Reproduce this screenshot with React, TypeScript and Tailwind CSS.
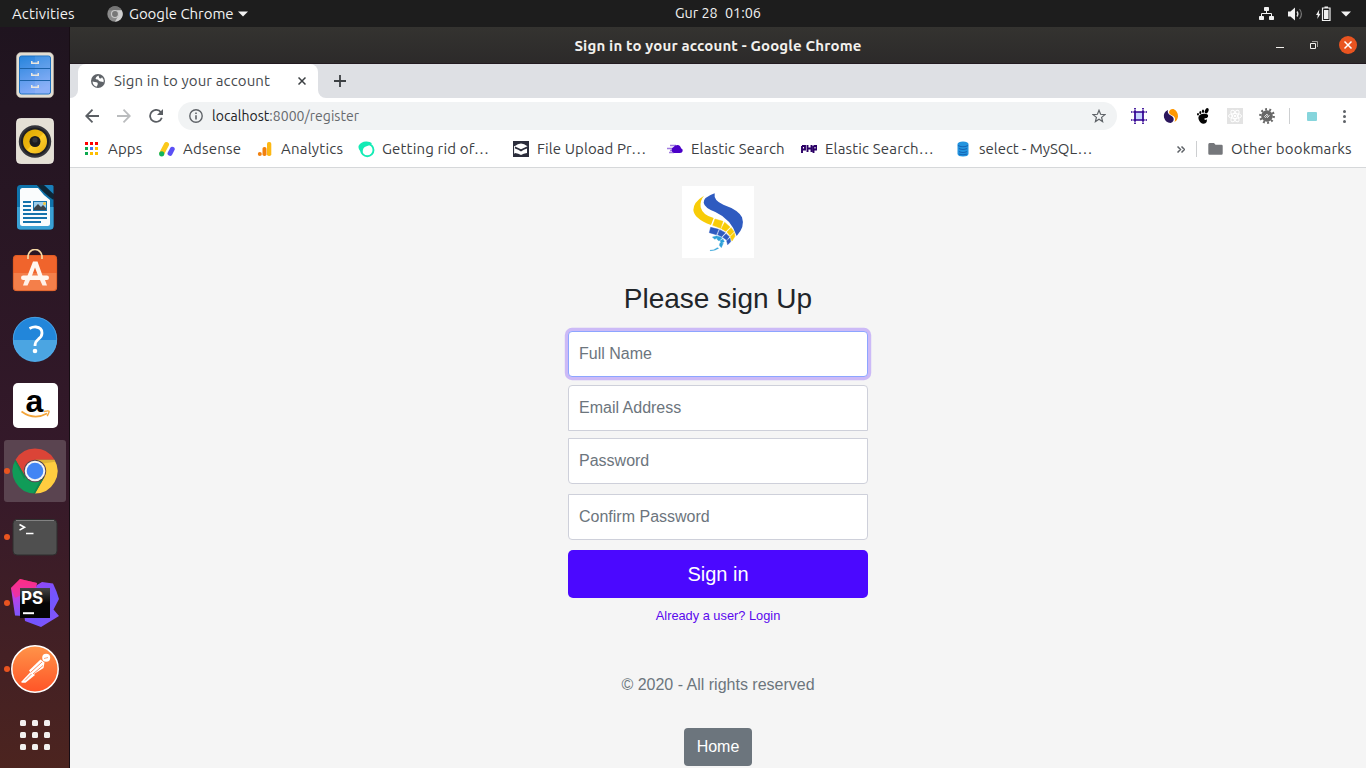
import type { ReactNode } from "react";

const ui = "font-['Ubuntu','Noto_Sans',sans-serif]";

/* ---------- Dock icons ---------- */

const FilesIcon = () => (
  <svg width="48" height="48" viewBox="0 0 48 48">
    <defs>
      <linearGradient id="fa" x1="0" y1="0" x2="0.3" y2="1">
        <stop offset="0" stopColor="#2584dc" />
        <stop offset="1" stopColor="#82aaf8" />
      </linearGradient>
    </defs>
    <rect x="5.5" y="1.5" width="37" height="45" rx="4.5" fill="#e3ded3" stroke="#b9b3a8" strokeWidth="0.6" />
    <rect x="8.5" y="5" width="31" height="38" rx="2" fill="url(#fa)" stroke="#1c71c2" />
    <path d="M24 5v38h13a2 2 0 0 0 2-2V7a2 2 0 0 0-2-2z" fill="#fff" opacity="0.08" />
    <path d="M9 17.5h30M9 29.5h30" stroke="#1c62a8" />
    <path d="M20 10h1.500v1.500h5V10H28v3h-8zM20 22h1.500v1.500h5V22H28v3h-8zM20 34h1.500v1.500h5V34H28v3h-8z" fill="#ebe7df" />
  </svg>
);

const MusicIcon = () => (
  <svg width="48" height="48" viewBox="0 0 48 48">
    <defs>
      <linearGradient id="ma" x1="0" y1="0" x2="1" y2="1">
        <stop offset="0" stopColor="#d9a800" />
        <stop offset="0.5" stopColor="#efb711" />
        <stop offset="0.52" stopColor="#ffd02b" />
        <stop offset="1" stopColor="#e6ad10" />
      </linearGradient>
    </defs>
    <rect x="5.5" y="1.5" width="37" height="45" rx="4" fill="#e4e0d5" stroke="#f3f0e8" strokeWidth="0.8" />
    <circle cx="24" cy="24.5" r="16.2" fill="#34353b" />
    <circle cx="24" cy="24.5" r="14" fill="#1f2024" />
    <circle cx="24" cy="24.5" r="12" fill="url(#ma)" />
    <circle cx="24" cy="24.5" r="5.5" fill="#1b1b1e" />
    <circle cx="24" cy="23" r="2.6" fill="#34353a" />
  </svg>
);

const WriterIcon = () => (
  <svg width="48" height="48" viewBox="0 0 48 48">
    <path d="M9.5 2H26l16.5 14v27a3.5 3.5 0 0 1-3.5 3.5h-29.5A3.5 3.5 0 0 1 6 43V5.5A3.5 3.5 0 0 1 9.5 2z" fill="#0f73ab" />
    <path d="M6 24h36.5v19a3.5 3.5 0 0 1-3.5 3.5h-29.5A3.5 3.5 0 0 1 6 43z" fill="#3aa0d4" />
    <path d="M26 2h15q1.5 0 1.5 1.5V17q-9-6-16.5-15z" fill="#0e2636" />
    <path d="M33 2h8q1.5 0 1.5 1.5V11z" fill="#1a7fba" />
    <path d="M11.5 5H27q5 7 12 12v23.5q0 2.500-2.500 2.500h-25Q9 43 9 40.500v-33Q9 5 11.500 5z" fill="#fafcfd" />
    <path d="M12 19h8M12 23h8M12 27h8M12 31h24M12 35h24M12 39h18" stroke="#1673ac" strokeWidth="2" />
    <rect x="22" y="18" width="14" height="10" fill="#1673ac" />
    <rect x="23" y="19" width="12" height="8" fill="#9dcdea" />
    <path d="M23 27v-2l4-4 3 3 2-2 3 3v2z" fill="#3d4449" />
    <circle cx="33.5" cy="20.5" r="1.5" fill="#f5c73d" />
  </svg>
);

const SoftwareIcon = () => (
  <svg width="48" height="48" viewBox="0 0 48 48">
    <rect x="2" y="6" width="44" height="36" rx="4" fill="#f0642c" />
    <path d="M2 24h44v14a4 4 0 0 1-4 4H6a4 4 0 0 1-4-4z" fill="#f47f4a" />
    <rect x="2.3" y="6.5" width="43.4" height="35.2" rx="3.5" fill="none" stroke="#d7581f" strokeWidth="0.7" />
    <path d="M17 10V7.5a7 7 0 0 1 14 0V10" fill="none" stroke="#f5d8a4" strokeWidth="1.7" />
    <path d="M22 12.5h4.5L32 28h-4.500L24 18.500 20.500 28H16z" fill="#fff7f0" />
    <rect x="10" y="26.5" width="28" height="4.5" rx="2.2" fill="#fff7f0" />
    <path d="M14 31h5l-2.500 5.500H12zM29 31h5l2 5.500h-4.500z" fill="#fff1e8" />
  </svg>
);

const HelpIcon = () => (
  <svg width="48" height="48" viewBox="0 0 48 48">
    <circle cx="24" cy="24" r="22" fill="#2286da" />
    <path d="M2 25h44a22 22 0 0 1-44 0z" fill="#4ba5e2" />
    <circle cx="24" cy="24" r="21.7" fill="none" stroke="#52a9e8" strokeWidth="0.8" />
    <path d="M18.5 13.5Q22 11.700 25 12q6 .5 6 6 0 3.500-3.500 6-3.500 2.700-3.500 7" fill="none" stroke="#fff" strokeWidth="2.8" />
    <circle cx="24" cy="36" r="2.3" fill="#fff" />
  </svg>
);

const AmazonIcon = () => (
  <div className="relative flex h-12 w-12 items-center justify-center">
    <div className="flex h-[45px] w-[45px] justify-center rounded-[5px] bg-white pr-px font-['Liberation_Sans',Arial,sans-serif] text-[32px] leading-[36px] font-bold text-black">
      a
    </div>
    <svg className="absolute top-0 left-0" width="48" height="48" viewBox="0 0 48 48">
      <path d="M10.5 30.5Q23 39.500 36 32.500" fill="none" stroke="#f3a53a" strokeWidth="1.7" />
      <path d="M33 30.5q4.500-1 5-.3t-1.800 5" fill="none" stroke="#f3a53a" strokeWidth="1.4" />
    </svg>
  </div>
);

const ChromeIcon = () => (
  <svg width={48} height={48} viewBox="0 0 48 48">
    <path d="M4.500 12.750A22.500 22.500 0 0 1 43.500 12.750L24 12.750A11.250 11.250 0 0 0 14.260 29.620z" fill="#db4437" />
    <path d="M43.500 12.750A22.500 22.500 0 0 1 24 46.500L33.740 29.620A11.250 11.250 0 0 0 24 12.750z" fill="#ffcd40" />
    <path d="M24 46.500A22.500 22.500 0 0 1 4.500 12.750L14.260 29.620A11.250 11.250 0 0 0 33.740 29.620z" fill="#109c58" />
    <path d="M24 12.750h19.500l.8 2L29 17zM14.260 29.620L4.500 12.750l-.8 1.600 9.500 18zM33.740 29.620L24 46.500l-1.800 0 9-17z" fill="#000" opacity="0.12" />
    <circle cx="24" cy="24" r="10.3" fill="#f4f4f4" />
    <circle cx="24" cy="24" r="8.3" fill="#4285f4" />
  </svg>
);

const ChromeSymbolic = () => (
  <svg width="16" height="16" viewBox="0 0 48 48">
    <circle cx="24" cy="24" r="23" fill="#8b8b8b" />
    <path d="M4 12.500A23 23 0 0 1 44 12.500L24 13z" fill="#747474" />
    <path d="M44 12.500A23 23 0 0 1 24 47L34 29.600 30 12.750z" fill="#cfcfcf" />
    <circle cx="24" cy="24" r="10.5" fill="#777" stroke="#c9c9c9" strokeWidth="3.5" />
  </svg>
);

const TerminalIcon = () => (
  <svg width="48" height="48" viewBox="0 0 48 48">
    <rect x="2" y="6.5" width="44" height="35.5" rx="4" fill="#4f4f4f" stroke="#2f2f2f" />
    <path d="M5 7.5h38" stroke="#828282" />
    <path d="M8.5 11.5l5 2.800-5 2.800" fill="none" stroke="#fff" strokeWidth="1.6" />
    <path d="M15 20.500h7.500" stroke="#fff" strokeWidth="1.5" />
  </svg>
);

const StormIcon = () => (
  <div className="relative h-12 w-12">
    <svg className="absolute top-0 left-0" width="48" height="48" viewBox="0 0 48 48">
      <defs>
        <linearGradient id="sa" x1="0" y1="0" x2="0" y2="1">
          <stop offset="0" stopColor="#fc3187" />
          <stop offset="0.4" stopColor="#c83de0" />
          <stop offset="1" stopColor="#7b58ff" />
        </linearGradient>
        <linearGradient id="sb" x1="0" y1="0" x2="1" y2="1">
          <stop offset="0" stopColor="#a63ff0" />
          <stop offset="0.6" stopColor="#7256ff" />
          <stop offset="1" stopColor="#8a54f5" />
        </linearGradient>
        <linearGradient id="sc" x1="0" y1="0" x2="0" y2="1">
          <stop offset="0" stopColor="#454545" />
          <stop offset="0.5" stopColor="#050505" />
        </linearGradient>
      </defs>
      <path d="M26 6l5-3 11 1.500 3.500 8L48 20l-5.500 10.500L48 37 30 48 14 42l-1-8z" fill="url(#sb)" />
      <path d="M0 9l9-9 17 4-2 14-12 19-8-.5z" fill="url(#sa)" />
      <path d="M0 9l9-9 17 4-3 6-19 9z" fill="#ff2d83" opacity="0.65" />
      <rect x="9" y="9" width="30" height="30" fill="url(#sc)" />
      <path d="M12 34.200h11" stroke="#fff" strokeWidth="2" />
    </svg>
    <span className="absolute top-[9px] left-[10px] font-['Inter','Open_Sans',sans-serif] text-[17px] leading-5 font-bold text-white">PS</span>
  </div>
);

const PostmanIcon = () => (
  <svg width="48" height="48" viewBox="0 0 48 48">
    <defs>
      <linearGradient id="pa" x1="0" y1="0" x2="0" y2="1">
        <stop offset="0" stopColor="#ff9449" />
        <stop offset="1" stopColor="#ff5427" />
      </linearGradient>
    </defs>
    <circle cx="24" cy="24" r="23.2" fill="url(#pa)" stroke="#fff" strokeWidth="1.5" />
    <circle cx="35.2" cy="12.8" r="4" fill="#fff" />
    <path d="M18 25.500L29.500 14.500l4 3-1 5.500L21.500 30z" fill="#fff" />
    <path d="M20 26.500L10.500 36.500l0 1.200h4L24 30z" fill="#fff" />
    <path d="M19.500 27.500L31 17M22 29L32 20.500M14 35.500l6.500-6.500" stroke="#ff7038" strokeWidth="0.8" />
    <path d="M33 13.500l4-1" stroke="#ff8040" strokeWidth="0.7" />
  </svg>
);

const AppsGridIcon = () => (
  <div className="grid grid-cols-3 gap-[6px]">
    {Array.from({ length: 9 }, (_, i) => (
      <div key={i} className="h-[6px] w-[6px] rounded-[1.5px] bg-[#f2f0f0]" />
    ))}
  </div>
);

const dock: { icon: ReactNode; running?: boolean; active?: boolean }[] = [
  { icon: <FilesIcon /> },
  { icon: <MusicIcon /> },
  { icon: <WriterIcon /> },
  { icon: <SoftwareIcon /> },
  { icon: <HelpIcon /> },
  { icon: <AmazonIcon /> },
  { icon: <ChromeIcon />, running: true, active: true },
  { icon: <TerminalIcon />, running: true },
  { icon: <StormIcon />, running: true },
  { icon: <PostmanIcon />, running: true },
  { icon: <AppsGridIcon /> },
];

const Dock = () => (
  <aside className="flex w-[70px] shrink-0 flex-col border-r border-[#170d14] bg-linear-to-b from-[#1f141f] via-[#35192a] via-60% to-[#4c241f] pt-[15px]">
    {dock.map((d, i) => (
      <div key={i} className="flex h-[66px] items-center justify-center pl-px">
        <div className={d.active ? "relative flex h-[62px] w-[62px] items-center justify-center rounded-[3px] bg-[#5a4450]" : "relative flex h-[62px] w-[62px] items-center justify-center"}>
          {d.running && <span className="absolute top-[28px] left-0 h-[6px] w-[6px] rounded-full bg-[#e95420]" />}
          {d.icon}
        </div>
      </div>
    ))}
  </aside>
);

/* ---------- System bar ---------- */

const TopBar = () => (
  <header className={`${ui} grid h-[27px] shrink-0 grid-cols-[1fr_auto_1fr] items-center bg-[#1d1d1d] text-[15px] text-[#f2f2f2]`}>
    <div className="flex items-center pl-3">
      <span className="w-[95px] pt-px tracking-[0.12px]">Activities</span>
      <ChromeSymbolic />
      <span className="ml-[6px] w-[109px] pt-px tracking-[-0.05px] whitespace-nowrap">Google Chrome</span>
      <svg width="10" height="6" viewBox="0 0 10 6"><path d="M0 0.5h10L5 5.500z" fill="#f2f2f2" /></svg>
    </div>
    <div className="ml-[70px] flex w-[86px] justify-between text-[14.4px] whitespace-nowrap">
      <span>Gur 28</span>
      <span>01:06</span>
    </div>
    <div className="flex items-center justify-end pr-[15px]">
      <svg width="16" height="14" viewBox="0 0 16 14" fill="#f2f2f2">
        <rect x="5" y="0" width="5" height="4" rx="0.8" /><rect x="0" y="9" width="5" height="4" rx="0.8" /><rect x="10" y="9" width="5" height="4" rx="0.8" />
        <path d="M7.500 4v3M2.500 9.500V6.500h10v3" fill="none" stroke="#f2f2f2" />
      </svg>
      <svg className="ml-[13px]" width="15" height="14" viewBox="0 0 15 14">
        <path d="M0 4.500h2.500L7 0.500v13L2.500 9.500H0z" fill="#f2f2f2" />
        <path d="M9 4.500q1.800 2.500 0 5" fill="none" stroke="#dedede" strokeWidth="1.3" />
        <path d="M11.500 2q3.800 5 0 10" fill="none" stroke="#777" strokeWidth="1.2" />
      </svg>
      <svg className="ml-[13px]" width="15" height="16" viewBox="0 0 15 16">
        <path d="M3.300 3.500L0 9h1.800L1.300 13 4.500 7.800H2.800z" fill="#f2f2f2" />
        <path d="M6.500 2h7.500v12.500H6.500z" fill="none" stroke="#f2f2f2" strokeWidth="1.2" />
        <path d="M8.500 0.500h3.500V2H8.500zM8 4h4.500v9H8z" fill="#f2f2f2" />
      </svg>
      <svg className="ml-[10px]" width="10" height="6" viewBox="0 0 10 6"><path d="M0 0.5h10L5 5.500z" fill="#f2f2f2" /></svg>
    </div>
  </header>
);

/* ---------- Browser chrome ---------- */

const TitleBar = () => (
  <div className={`${ui} grid h-[37px] shrink-0 grid-cols-[1fr_auto_1fr] items-center border-b border-[#221a20] bg-linear-to-b from-[#343330] to-[#2c2a2a]`}>
    <span />
    <span className="pt-[2px] text-[15px] font-bold tracking-[0.16px] whitespace-nowrap text-[#f3f1ed]">Sign in to your account - Google Chrome</span>
    <div className="flex items-center justify-end pr-[9px]">
      <svg width="8" height="12" viewBox="0 0 8 12"><path d="M0 8.500h8" stroke="#f3f1ed" /></svg>
      <svg className="ml-[26px]" width="8" height="8" viewBox="0 0 8 8">
        <path d="M2 .5h5.500V6" fill="none" stroke="#a09d99" />
        <path d="M.5 2.500h5v5h-5z" fill="none" stroke="#f3f1ed" />
      </svg>
      <svg className="ml-[21px]" width="18" height="18" viewBox="0 0 18 18">
        <circle cx="9" cy="9" r="9" fill="#e95420" />
        <path d="M5.500 5.500l7 7M12.500 5.500l-7 7" stroke="#fff" strokeWidth="1.5" />
      </svg>
    </div>
  </div>
);

const GlobeIcon = () => (
  <svg width="16" height="16" viewBox="0 0 16 16">
    <circle cx="8" cy="8" r="7" fill="#5f6368" />
    <path d="M2.500 8.500Q5 9 6.500 9.200 8 9.500 7.800 11q-.3 1.500-1.300 2.700-3.500-1-4-5.200zM8.500 2.500Q6 3.500 5.500 5.500q.5 1.300 2.500 1 .8 2 2.500 2 1.800.3 3 .8.500-3-1.500-5-.8 1.500-2 1.200Q9 5 8.500 2.500z" fill="#fff" />
  </svg>
);

const TabStrip = () => (
  <div className={`${ui} flex h-[34px] shrink-0 bg-[#dee0e4]`}>
    <div className="w-2 bg-white"><div className="h-full w-full rounded-br-lg bg-[#dee0e4]" /></div>
    <div className="flex w-[240px] items-center rounded-t-lg bg-white pl-3">
      <GlobeIcon />
      <span className="ml-2 flex-1 text-[15px] tracking-[0.14px] whitespace-nowrap text-[#45494d]">Sign in to your account</span>
      <svg className="mr-3" width="8" height="8" viewBox="0 0 8 8"><path d="M.5.5l7 7M7.500.5l-7 7" stroke="#3c4043" strokeWidth="1.5" /></svg>
    </div>
    <div className="flex-1 bg-white">
      <div className="flex h-full items-center rounded-bl-lg bg-[#dee0e4] pl-4">
        <svg width="12" height="12" viewBox="0 0 12 12"><path d="M6 0v12M0 6h12" stroke="#3c4043" strokeWidth="1.8" /></svg>
      </div>
    </div>
  </div>
);

const Toolbar = () => (
  <div className={`${ui} flex h-9 shrink-0 items-center bg-white pl-[15px]`}>
    <svg width="14" height="14" viewBox="0 0 14 14"><path d="M14 7H1.500M7.500.7L1.200 7l6.300 6.300" fill="none" stroke="#5a5e63" strokeWidth="1.8" /></svg>
    <svg className="ml-[18px]" width="14" height="14" viewBox="0 0 14 14"><path d="M0 7h12.500M6.500.7L12.800 7l-6.300 6.300" fill="none" stroke="#babcbe" strokeWidth="1.8" /></svg>
    <svg className="ml-[18px]" width="14" height="14" viewBox="0 0 14 14">
      <path d="M12 3.400A6 6 0 1 0 12.800 8.800" fill="none" stroke="#5a5e63" strokeWidth="1.8" />
      <path d="M14 0v6H8z" fill="#5a5e63" />
    </svg>
    <div className="ml-[15px] flex h-7 w-[939px] items-center rounded-full bg-[#f1f3f4] pl-[11px] text-[14px]">
      <svg width="14" height="14" viewBox="0 0 14 14">
        <circle cx="7" cy="7" r="6.2" fill="none" stroke="#5f6368" strokeWidth="1.4" />
        <path d="M6.200 6.200h1.600v4.300H6.200zM6.200 3.400h1.600V5H6.200z" fill="#5f6368" />
      </svg>
      <span className="ml-[9px] flex-1 tracking-[0.04px] text-[#66696d]"><span className="text-[#202124]">localhost</span>:8000/register</span>
      <svg className="mr-[11px]" width="14" height="14" viewBox="0 0 14 14">
        <path d="M7 1.300l1.600 4 4.300.3-3.300 2.800 1 4.200L7 10.300l-3.600 2.300 1-4.200L1.100 5.600l4.300-.3z" fill="none" stroke="#5f6368" strokeWidth="1.2" />
      </svg>
    </div>
    <svg className="ml-[14px]" width="16" height="16" viewBox="0 0 16 16">
      <rect x="4" y="4" width="8" height="8" fill="#c9d6ff" />
      <path d="M4 0v16M12 0v16M0 4h16M0 12h16" stroke="#300091" strokeWidth="1.7" strokeDasharray="1.5 0.8 11.4 0.8" />
    </svg>
    <svg className="ml-4" width="16" height="16" viewBox="0 0 16 16">
      <path d="M5 2Q0 4 1 9.500 2.500 14.500 7.500 15q4-1.500 3-5Q10 8.500 7 7 4 5 5 2z" fill="#2b165c" />
      <path d="M6 4Q7 .5 10.500 1 15 3 15 8.500q-.5 4-3.500 5.500Q13 10 10.500 8 6 6.500 6 4z" fill="#ff9800" />
    </svg>
    <svg className="ml-4" width="16" height="16" viewBox="0 0 16 16">
      <path d="M8.500 5.800q5.500-.3 4.500 2.900-.8 1.800-3.300 1.600-1 1.200.5 1.800l1.500-.8q1 3.800-3 4.500Q5 15.500 3.500 11 2.500 6.500 8.500 5.800z" fill="#050505" />
      <ellipse cx="11.7" cy="2.8" rx="1.7" ry="2.8" transform="rotate(25 11.7 2.8)" /><ellipse cx="8" cy="3.2" rx="1.1" ry="1.8" /><ellipse cx="5.3" cy="4.5" rx="1" ry="1.5" /><ellipse cx="3" cy="6.3" rx=".9" ry="1.3" />
    </svg>
    <svg className="ml-4" width="16" height="16" viewBox="0 0 16 16">
      <rect width="16" height="16" fill="#e3e3e3" />
      <g fill="none" stroke="#fff" strokeWidth="1"><ellipse cx="8" cy="8" rx="6.5" ry="2.5" /><ellipse cx="8" cy="8" rx="6.5" ry="2.5" transform="rotate(60 8 8)" /><ellipse cx="8" cy="8" rx="6.5" ry="2.5" transform="rotate(120 8 8)" /></g>
      <circle cx="8" cy="8" r="1.3" fill="#fff" />
    </svg>
    <svg className="ml-4" width="16" height="16" viewBox="0 0 16 16">
      <circle cx="8" cy="8" r="5.8" fill="#686868" />
      <circle cx="8" cy="8" r="6.7" fill="none" stroke="#686868" strokeWidth="2.4" strokeDasharray="1.9 2.31" />
      <path d="M5.500 8.500L8 6.200l1 1-2.500 2.500zM8 9.800L10.500 7.500" fill="none" stroke="#e8e8e8" strokeWidth="1" />
    </svg>
    <div className="ml-[14px] h-4 w-px bg-[#cdcfd1]" />
    <div className="ml-[17px] h-[9px] w-[10px] rounded-[1px] bg-[#86d5dc]" />
    <svg className="ml-[26px]" width="3" height="13" viewBox="0 0 3 13" fill="#5f6368"><circle cx="1.5" cy="1.5" r="1.5" /><circle cx="1.5" cy="6.5" r="1.5" /><circle cx="1.5" cy="11.5" r="1.5" /></svg>
  </div>
);

const squares = ["#f00", "#f00", "#f00", "#0da94f", "#4471f5", "#fdbd00", "#0da94f", "#fdbd00", "#fdbd00"];

const bookmarks: { label: string; box: string; text: string; icon: ReactNode }[] = [
  {
    label: "Apps", box: "w-[75px]", text: "ml-2 tracking-[0.15px]",
    icon: <svg width="16" height="16" viewBox="0 0 16 16">{squares.map((c, i) => <rect key={i} x={1 + (i % 3) * 5} y={1 + Math.floor(i / 3) * 5} width="3" height="3" fill={c} />)}</svg>,
  },
  {
    label: "Adsense", box: "w-[98px]", text: "ml-2 tracking-[0.22px]",
    icon: <svg width="16" height="16" viewBox="0 0 16 16"><path d="M3 12L7.500 3.500" stroke="#fbc91b" strokeWidth="5" strokeLinecap="round" /><path d="M11 12.500l2.300-4.300" stroke="#5b50f5" strokeWidth="4.8" strokeLinecap="round" /><circle cx="2.7" cy="12.8" r="2.6" fill="#12b45c" /></svg>,
  },
  {
    label: "Analytics", box: "w-[101px]", text: "ml-2 tracking-[0.22px]",
    icon: <svg width="16" height="16" viewBox="0 0 16 16"><rect x="10" y="1" width="4.3" height="14" rx="1.8" fill="#fdb813" /><rect x="5.5" y="6" width="4" height="9" rx="1.8" fill="#f1800e" /><circle cx="2.8" cy="13" r="2" fill="#f1800e" /></svg>,
  },
  {
    label: "Getting rid of…", box: "w-[155px]", text: "ml-[7px] tracking-[0.16px]",
    icon: <svg width="17" height="17" viewBox="0 0 17 17"><circle cx="9.3" cy="9" r="6.2" fill="none" stroke="#14ebb5" strokeWidth="1.9" /><path d="M.5 5Q3 .5 8 .5q4-.2 6 1.800-2 2.500-5.500 3Q4.500 6 4.500 12 0 9 .5 5z" fill="#14ebb5" /></svg>,
  },
  {
    label: "File Upload Pr…", box: "w-[154px]", text: "ml-2 tracking-[0.1px]",
    icon: <svg width="16" height="16" viewBox="0 0 16 16"><path d="M0 0h16v16H0z" fill="#2b2d3b" /><path d="M1.500 5.200Q5 2.500 8 2.500t6.500 2.700L8 8.200z" fill="#fff" /><path d="M2 7.500q3.500 1 6 3 2.500-2 6-3v4.500q-3.500.5-6 2-2.500-1.500-6-2z" fill="#fff" /><path d="M1.500 5v7.500" stroke="#fff" strokeWidth="0.9" /></svg>,
  },
  {
    label: "Elastic Search", box: "w-[134px]", text: "ml-2 tracking-[0.16px]",
    icon: <svg width="16" height="16" viewBox="0 0 16 16"><path d="M3 4.500h6M0 7.500h6M3 9.500h4M2 11.500h5" stroke="#a07be0" strokeWidth="1.3" /><path d="M7 12a3.200 3.200 0 0 1-.5-6Q8 4 10.500 4q3 .3 3.500 3.300 2 .7 1.700 2.700-.5 2-2.700 2z" fill="#4b00c8" /></svg>,
  },
  {
    label: "Elastic Search…", box: "w-[154px]", text: "ml-2 tracking-[0.16px]",
    icon: <svg width="16" height="16" viewBox="0 0 16 16"><path d="M1 12V5M1 5h3v3.500H1M6.500 4v7M6.500 7.500h4M10.500 4v7M12.500 12V5M12.500 5h3v3.500h-3" fill="none" stroke="#2b0066" strokeWidth="1.9" /></svg>,
  },
  {
    label: "select - MySQL…", box: "w-[222px]", text: "ml-2 tracking-[-0.03px]",
    icon: <svg width="16" height="16" viewBox="0 0 16 16"><path d="M2.500 3Q3 .5 8 .5T13.500 3v10q-.5 2.500-5.500 2.500T2.500 13z" fill="#2394df" /><path d="M3 4.500q5 2.500 10 0M4 7.500q4 2 8 0M4 10.500q4 2 8 0M4 13q4 1.500 8 0" fill="none" stroke="#1565b5" strokeWidth="1.1" /></svg>,
  },
];

const BookmarksBar = () => (
  <div className={`${ui} flex h-[34px] shrink-0 items-center border-b border-[#d6d8da] bg-white pl-[14px] pb-[3px] text-[15px] text-[#3c4043]`}>
    {bookmarks.map((b, i) => (
      <div key={i} className={`${b.box} flex shrink-0 items-center whitespace-nowrap`}>
        <span className="shrink-0">{b.icon}</span>
        <span className={b.text}>{b.label}</span>
      </div>
    ))}
    <svg width="8" height="7" viewBox="0 0 8 7"><path d="M.5.5l3 3-3 3M4.500.5l3 3-3 3" fill="none" stroke="#5f6368" strokeWidth="1.5" /></svg>
    <div className="ml-[11px] h-4 w-px bg-[#cdcfd1]" />
    <svg className="ml-[11px]" width="15" height="12" viewBox="0 0 15 12"><path d="M1.500 0H6l1.500 1.800h6q1.200 0 1.200 1.200v7.500q0 1.200-1.200 1.200h-12Q.3 11.700.3 10.500v-9Q.3 0 1.500 0z" fill="#75777b" /></svg>
    <span className="ml-2 tracking-[0.2px] whitespace-nowrap">Other bookmarks</span>
  </div>
);

/* ---------- Page ---------- */

const Logo = () => (
  <svg className="bg-white" width="72" height="72" viewBox="0 0 216 216">
    <path d="M98 22Q64 34 65 50 67 65 100 78 148 100 164 150 190 122 180 94 170 72 124 56 94 44 98 22z" fill="#2f5bc0" />
    <path d="M66 29Q34 48 34 72 36 98 87 117L95 96Q62 88 56 64 53 44 66 29z" fill="#f8cc08" />
    <path
      d="M99 99l24 7-7 21-24-9zM128 109l16 14-12 13-14-8zM147 125l9 12-12 12-9-11zM157 140l2 11-9 14-5-13z"
      fill="#f8cc08" stroke="#f8cc08" strokeWidth="1.5"
    />
    <path
      d="M86 124l24 6-7 16-21-6zM113 131l17 9-11 12-12-6zM132 143l10 9-8 10-12-8zM144 156l2 11-9 9-3-12z"
      fill="#2f5bc0" stroke="#2f5bc0" strokeWidth="1.5"
    />
    <path
      d="M91 153l15-4 3 5-11 6zM110 151l11 5-10 9-7-6zM123 159l4 8-9 5-4-8zM114 170l10 2-6 13-6-7zM84 193q13 0 22-8l4 2q-10 8-26 7z"
      fill="#2ea0d8" stroke="#2ea0d8" strokeWidth="1"
    />
  </svg>
);

const fields = [
  { label: "Full Name", type: "text", cls: "rounded border-[#8da5ff] shadow-[0_0_0_3.2px_rgba(85,10,255,0.25)]" },
  { label: "Email Address", type: "email", cls: "mt-2 rounded-t border-[#ced0da]" },
  { label: "Password", type: "password", cls: "mt-[7px] rounded-b border-[#ced0da]" },
  { label: "Confirm Password", type: "password", cls: "mt-[10px] rounded-b border-[#ced0da]" },
];

const SignUp = () => (
  <main className="flex flex-1 flex-col items-center overflow-hidden bg-[#f5f5f5] pt-[18px] font-['Liberation_Sans',Arial,sans-serif]">
    <Logo />
    <h1 className="mt-6 text-[28px] leading-[34px] text-[#212529]">Please sign Up</h1>
    <form className="mt-[15px] flex w-[300px] flex-col">
      {fields.map((f) => (
        <input key={f.label} type={f.type} placeholder={f.label} className={`${f.cls} h-[46px] w-full border bg-white px-[10px] text-base outline-none placeholder:text-[#6c757d]`} />
      ))}
      <button type="button" className="mt-[10px] h-12 rounded-[5px] bg-[#4b08ff] text-[20px] text-white">Sign in</button>
    </form>
    <a className="mt-2 text-[12.8px] leading-5 text-[#5a08ee]">Already a user? Login</a>
    <p className="mt-[47px] text-base leading-6 text-[#6c757d]">© 2020 - All rights reserved</p>
    <button type="button" className="mt-[31px] h-[38px] w-[68px] shrink-0 rounded bg-[#6c757d] text-base text-white">Home</button>
  </main>
);

export default function App() {
  return (
    <div className="flex h-[768px] w-[1366px] flex-col overflow-hidden">
      <TopBar />
      <div className="flex min-h-0 flex-1">
        <Dock />
        <div className="flex min-w-0 flex-1 flex-col">
          <TitleBar />
          <TabStrip />
          <Toolbar />
          <BookmarksBar />
          <SignUp />
        </div>
      </div>
    </div>
  );
}
